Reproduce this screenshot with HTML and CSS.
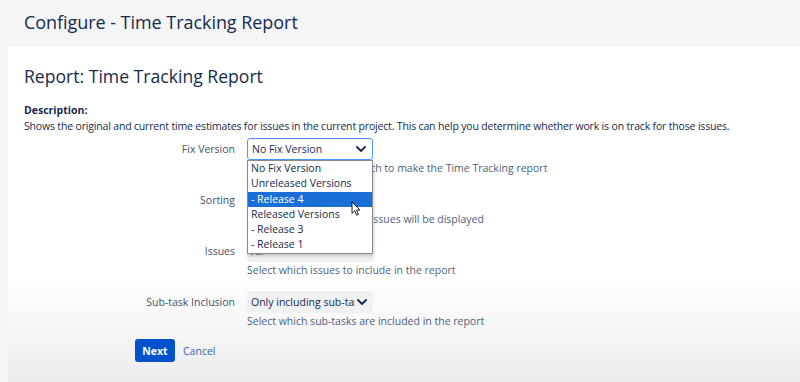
FILE: index.html
```html
<!DOCTYPE html>
<html lang="en">
<head>
<meta charset="utf-8">
<title>Configure - Time Tracking Report</title>
<link rel="stylesheet" href="styles.css">
</head>
<body>
<header class="page-header">
  <h1 class="page-title">Configure - Time Tracking Report</h1>
</header>
<main class="panel">
  <h2 class="report-title">Report: Time Tracking Report</h2>
  <div class="description">
    <div class="desc-label">Description:</div>
    <div class="desc-text">Shows the original and current time estimates for issues in the current project. This can help you determine whether work is on track for those issues.</div>
  </div>
  <form class="form">
    <div class="row">
      <label class="label">Fix Version</label>
      <div class="field">
        <div class="select select-focus">
          <span class="select-value">No Fix Version</span>
          <svg class="chevron" viewBox="0 0 10 6" width="10" height="6"><path d="M1 1l4 4 4-4" fill="none" stroke="#172b4d" stroke-width="1.8" stroke-linecap="round" stroke-linejoin="round"/></svg>
          <ul class="dropdown">
            <li>No Fix Version</li>
            <li>Unreleased Versions</li>
            <li class="active">- Release 4</li>
            <li>Released Versions</li>
            <li>- Release 3</li>
            <li>- Release 1</li>
          </ul>
          <svg class="cursor" viewBox="0 0 11 17" width="10" height="15"><path d="M1 1v13l3-3 2.2 5 2-0.9-2.2-4.8H10z" fill="#fff" stroke="#000" stroke-width="1" stroke-linejoin="round"/></svg>
        </div>
        <div class="help">Select the version for which to make the Time Tracking report</div>
      </div>
    </div>
    <div class="row">
      <label class="label">Sorting</label>
      <div class="field">
        <div class="select select-grey"><span class="select-value">Least completed issues first</span></div>
        <div class="help">Select the order in which issues will be displayed</div>
      </div>
    </div>
    <div class="row">
      <label class="label">Issues</label>
      <div class="field">
        <div class="select select-grey"><span class="select-value">All</span></div>
        <div class="help">Select which issues to include in the report</div>
      </div>
    </div>
    <div class="row">
      <label class="label">Sub-task Inclusion</label>
      <div class="field">
        <div class="select select-grey">
          <span class="select-value clip">Only including sub-tasks</span>
          <svg class="chevron" viewBox="0 0 10 6" width="10" height="6"><path d="M1 1l4 4 4-4" fill="none" stroke="#172b4d" stroke-width="1.8" stroke-linecap="round" stroke-linejoin="round"/></svg>
        </div>
        <div class="help">Select which sub-tasks are included in the report</div>
      </div>
    </div>
    <div class="actions">
      <button type="button" class="btn-primary">Next</button>
      <a class="cancel" href="#">Cancel</a>
    </div>
  </form>
</main>
</body>
</html>
```
FILE: styles.css
```css
html, body {
  margin: 0;
  padding: 0;
}
body {
  width: 800px;
  height: 382px;
  overflow: hidden;
  background: #f4f5f7;
  font-family: "Open Sans", "Noto Sans", sans-serif;
  color: #172b4d;
}
.page-header {
  height: 47px;
  padding: 0 24px;
  display: flex;
  align-items: center;
}
.page-title {
  margin: 0;
  font-size: 18px;
  font-weight: 500;
  letter-spacing: -0.05px;
  color: #172b4d;
  position: relative;
  top: -2px;
}
.panel {
  margin-left: 8px;
  height: 335px;
  background: linear-gradient(to bottom, #ffffff 0px, #ffffff 230px, #ececec 335px);
  padding: 16px 16px 0 16px;
  box-sizing: border-box;
}
.report-title {
  margin: 0;
  font-size: 17.6px;
  font-weight: 500;
  line-height: 26px;
  color: #172b4d;
}
.description {
  margin-top: 13px;
  font-size: 10.5px;
  line-height: 16px;
}
.desc-label {
  font-weight: 700;
}
.desc-text {
  color: #172b4d;
  white-space: nowrap;
  letter-spacing: -0.17px;
}
.form {
  margin-top: 4px;
}
.row {
  display: grid;
  grid-template-columns: 211px 126px;
  column-gap: 12px;
  margin-bottom: 13px;
  font-size: 10.5px;
}
.label {
  text-align: right;
  line-height: 22px;
  color: #42526e;
}
.field {
  position: relative;
}
.select {
  position: relative;
  height: 22px;
  width: 126px;
  box-sizing: border-box;
  display: flex;
  align-items: center;
  padding: 0 4px;
  border-radius: 3px;
  font-size: 10.5px;
}
.select-focus {
  border: 1px solid #4c9aff;
  background: #fff;
  z-index: 2;
}
.select-grey {
  background: #f0f1f3;
}
.select-value {
  white-space: nowrap;
  overflow: hidden;
  flex: 1;
  color: #172b4d;
}
.clip {
  text-overflow: clip;
}
.chevron {
  flex: none;
  margin-left: 2px;
  margin-right: 2px;
}
.help {
  line-height: 16px;
  color: #505f79;
  white-space: nowrap;
}
.dropdown {
  position: absolute;
  left: -1px;
  top: 21px;
  width: 126px;
  box-sizing: border-box;
  margin: 0;
  padding: 0;
  list-style: none;
  background: #fff;
  border: 1px solid #8a8a8a;
  box-shadow: 1px 2px 3px rgba(0,0,0,0.2);
  font-size: 10.5px;
}
.dropdown li {
  height: 15.3px;
  line-height: 15px;
  padding-left: 3px;
  color: #172b4d;
  white-space: nowrap;
}
.dropdown li.active {
  background: #1a6fd6;
  color: #fff;
}
.cursor {
  position: absolute;
  left: 103px;
  top: 62px;
}
.actions {
  display: flex;
  align-items: center;
  gap: 8px;
  margin-left: 111px;
  margin-top: -3px;
}
.btn-primary {
  height: 23px;
  width: 40px;
  padding: 0;
  border: none;
  border-radius: 3px;
  background: #0052cc;
  color: #fff;
  font-family: inherit;
  font-size: 10.5px;
  font-weight: 700;
}
.cancel {
  font-size: 10.5px;
  color: #3a63b8;
  text-decoration: none;
}
```
